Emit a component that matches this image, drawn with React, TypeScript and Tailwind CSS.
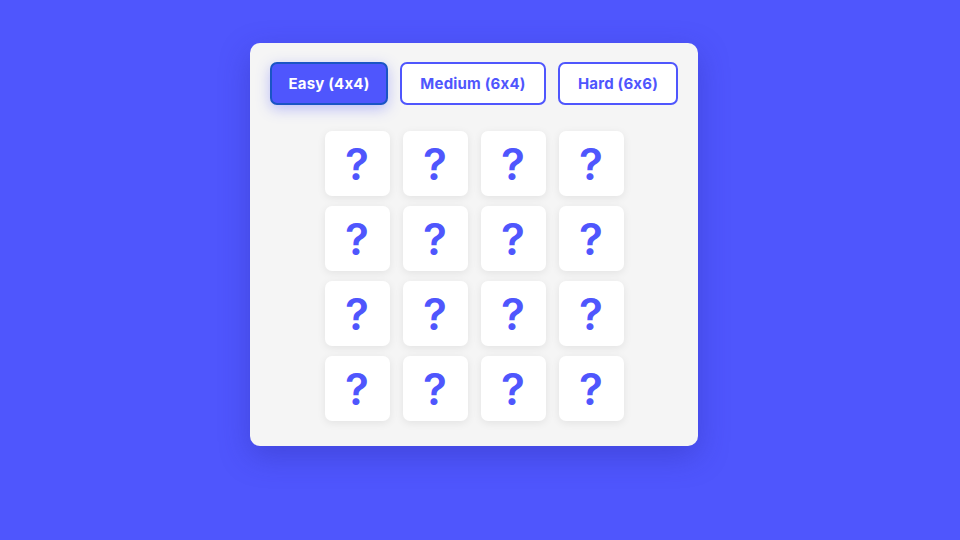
import { useState } from "react";

type Level = {
  label: string;
  cols: number;
  rows: number;
  width: string;
};

const levels: Level[] = [
  { label: "Easy (4x4)", cols: 4, rows: 4, width: "w-[118px]" },
  { label: "Medium (6x4)", cols: 6, rows: 4, width: "w-[146px]" },
  { label: "Hard (6x6)", cols: 6, rows: 6, width: "w-[120px]" },
];

export default function App() {
  const [level, setLevel] = useState(0);
  const tiles = Array.from({ length: 16 });

  return (
    <div
      className="min-h-screen w-full bg-[#4f56fd] flex justify-center pt-[43px] pr-3 [font-feature-settings:'calt'_0]"
      style={{ fontFamily: 'Inter, "Open Sans", sans-serif' }}
    >
      <div className="w-[448px] h-[403px] bg-[#f5f5f5] rounded-[10px] shadow-[0_10px_30px_rgba(40,40,160,0.35)] px-5 pt-[19px] flex flex-col items-center">
        <div className="flex gap-3 w-full">
          {levels.map((l, i) => (
            <button
              key={l.label}
              onClick={() => setLevel(i)}
              className={
                (i === level
                  ? "border-[#1a55c4] bg-[#4f56fd] text-white shadow-[0_4px_14px_rgba(79,86,253,0.35)] "
                  : "border-[#4f56fd] bg-white text-[#4f56fd] ") +
                l.width +
                " h-[43px] pt-[2px] rounded-[7px] border-2 text-[15px] font-bold tracking-[0.2px]"
              }
            >
              {l.label}
            </button>
          ))}
        </div>

        <div className="mt-[26px] grid grid-cols-[repeat(4,65px)] gap-x-[13px] gap-y-[10px]">
          {tiles.map((_, i) => (
            <div
              key={i}
              className="h-[65px] bg-white rounded-[7px] shadow-[0_2px_8px_rgba(0,0,0,0.08)] flex items-center justify-center text-[#4f56fd] text-[44px] font-semibold leading-none"
            >
              ?
            </div>
          ))}
        </div>
      </div>
    </div>
  );
}
